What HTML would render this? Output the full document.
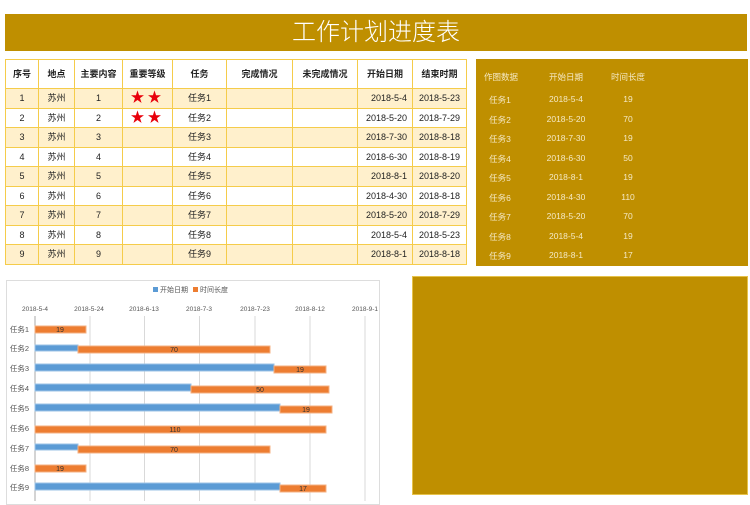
<!DOCTYPE html>
<html><head><meta charset="utf-8"><style>
*{margin:0;padding:0;box-sizing:border-box}
body{width:750px;height:501px;background:#fff;position:relative;overflow:hidden;font-family:"Liberation Sans","Noto Sans CJK SC",sans-serif}
.title{position:absolute;left:5px;top:14px;width:742px;height:37px;background:#bf8f00;color:#fff;font-size:24px;line-height:37px;text-align:center;font-family:"Liberation Sans","Noto Sans CJK SC",sans-serif;font-weight:300}
table{position:absolute;left:5px;top:59px;border-collapse:collapse;font-size:9px;color:#222;table-layout:fixed;width:461px}
td{border:1px solid #f5cc4a;text-align:center;height:19.5px;line-height:12px;padding:0;overflow:hidden}
tr.h td{height:29px;font-weight:bold;font-size:9px}
tr.y td{background:#fff0cc}
td.r{text-align:right;padding-right:5px}
.star{color:#e8000b;font-size:14px;line-height:12px;letter-spacing:3px;display:inline-block;height:12px}
.panel{position:absolute;left:476px;top:59px;width:272px;height:207px;background:#bf8f00;color:#f5e9c4;font-size:8.5px}
.panel div{position:absolute;width:70px;text-align:center}
.gold{position:absolute;left:412px;top:276px;width:336px;height:219px;background:#bf8f00;border:1px solid #e6c24a}
.chart{position:absolute;left:6px;top:280px;width:374px;height:225px;border:1px solid #ddd;background:#fff}
</style></head><body>
<div class="title">工作计划进度表</div>
<table>
<colgroup><col style="width:33px"><col style="width:36px"><col style="width:48px"><col style="width:50px"><col style="width:54px"><col style="width:66px"><col style="width:65px"><col style="width:55px"><col style="width:54px"></colgroup>
<tr class="h"><td>序号</td><td>地点</td><td>主要内容</td><td>重要等级</td><td>任务</td><td>完成情况</td><td>未完成情况</td><td>开始日期</td><td>结束时期</td></tr>
<tr class="y"><td>1</td><td>苏州</td><td>1</td><td><span class="star">★★</span></td><td>任务1</td><td></td><td></td><td class="r">2018-5-4</td><td>2018-5-23</td></tr>
<tr><td>2</td><td>苏州</td><td>2</td><td><span class="star">★★</span></td><td>任务2</td><td></td><td></td><td class="r">2018-5-20</td><td>2018-7-29</td></tr>
<tr class="y"><td>3</td><td>苏州</td><td>3</td><td></td><td>任务3</td><td></td><td></td><td class="r">2018-7-30</td><td>2018-8-18</td></tr>
<tr><td>4</td><td>苏州</td><td>4</td><td></td><td>任务4</td><td></td><td></td><td class="r">2018-6-30</td><td>2018-8-19</td></tr>
<tr class="y"><td>5</td><td>苏州</td><td>5</td><td></td><td>任务5</td><td></td><td></td><td class="r">2018-8-1</td><td>2018-8-20</td></tr>
<tr><td>6</td><td>苏州</td><td>6</td><td></td><td>任务6</td><td></td><td></td><td class="r">2018-4-30</td><td>2018-8-18</td></tr>
<tr class="y"><td>7</td><td>苏州</td><td>7</td><td></td><td>任务7</td><td></td><td></td><td class="r">2018-5-20</td><td>2018-7-29</td></tr>
<tr><td>8</td><td>苏州</td><td>8</td><td></td><td>任务8</td><td></td><td></td><td class="r">2018-5-4</td><td>2018-5-23</td></tr>
<tr class="y"><td>9</td><td>苏州</td><td>9</td><td></td><td>任务9</td><td></td><td></td><td class="r">2018-8-1</td><td>2018-8-18</td></tr>
</table>
<div class="panel">
<div style="left:-10px;top:12px">作图数据</div><div style="left:55px;top:12px">开始日期</div><div style="left:117px;top:12px">时间长度</div>
<div style="left:-11px;top:35px">任务1</div><div style="left:55px;top:35px">2018-5-4</div><div style="left:117px;top:35px">19</div>
<div style="left:-11px;top:55px">任务2</div><div style="left:55px;top:55px">2018-5-20</div><div style="left:117px;top:55px">70</div>
<div style="left:-11px;top:74px">任务3</div><div style="left:55px;top:74px">2018-7-30</div><div style="left:117px;top:74px">19</div>
<div style="left:-11px;top:94px">任务4</div><div style="left:55px;top:94px">2018-6-30</div><div style="left:117px;top:94px">50</div>
<div style="left:-11px;top:113px">任务5</div><div style="left:55px;top:113px">2018-8-1</div><div style="left:117px;top:113px">19</div>
<div style="left:-11px;top:133px">任务6</div><div style="left:55px;top:133px">2018-4-30</div><div style="left:117px;top:133px">110</div>
<div style="left:-11px;top:152px">任务7</div><div style="left:55px;top:152px">2018-5-20</div><div style="left:117px;top:152px">70</div>
<div style="left:-11px;top:172px">任务8</div><div style="left:55px;top:172px">2018-5-4</div><div style="left:117px;top:172px">19</div>
<div style="left:-11px;top:191px">任务9</div><div style="left:55px;top:191px">2018-8-1</div><div style="left:117px;top:191px">17</div>
</div>
<div class="gold"></div>
<div class="chart"></div>
<svg style="position:absolute;left:0;top:0" width="750" height="501" font-family="Liberation Sans, Noto Sans CJK SC, sans-serif">
<g stroke="#d9d9d9" stroke-width="1">
<line x1="90" y1="316" x2="90" y2="501"/><line x1="144.5" y1="316" x2="144.5" y2="501"/><line x1="199.5" y1="316" x2="199.5" y2="501"/><line x1="255" y1="316" x2="255" y2="501"/><line x1="310" y1="316" x2="310" y2="501"/><line x1="365" y1="316" x2="365" y2="501"/>
</g>
<line x1="35" y1="316" x2="35" y2="501" stroke="#aaa"/>
<rect x="153" y="287" width="5" height="5" fill="#5b9bd5"/><text x="160" y="292" font-size="7" fill="#555">开始日期</text>
<rect x="193" y="287" width="5" height="5" fill="#ed7d31"/><text x="200" y="292" font-size="7" fill="#555">时间长度</text>
<g font-size="6.5" fill="#555" text-anchor="middle">
<text x="35" y="311">2018-5-4</text><text x="89" y="311">2018-5-24</text><text x="144" y="311">2018-6-13</text><text x="199" y="311">2018-7-3</text><text x="255" y="311">2018-7-23</text><text x="310" y="311">2018-8-12</text><text x="365" y="311">2018-9-1</text>
</g>
<g font-size="7.5" fill="#555" text-anchor="end">
<text x="29" y="332">任务1</text><text x="29" y="351">任务2</text><text x="29" y="371">任务3</text><text x="29" y="391">任务4</text><text x="29" y="411">任务5</text><text x="29" y="431">任务6</text><text x="29" y="451">任务7</text><text x="29" y="471">任务8</text><text x="29" y="490">任务9</text>
</g>
<g fill="#5b9bd5" stroke="#9cc3e6" stroke-width="1">
<rect x="35" y="345" width="43" height="6"/><rect x="35" y="364" width="239" height="7"/><rect x="35" y="384" width="156" height="7"/><rect x="35" y="404" width="245" height="7"/><rect x="35" y="444" width="43" height="6"/><rect x="35" y="483" width="245" height="7"/>
</g>
<g fill="#ed7d31" stroke="#f4b183" stroke-width="1">
<rect x="35" y="326" width="51" height="7"/><rect x="78" y="346" width="192" height="7"/><rect x="274" y="366" width="52" height="7"/><rect x="191" y="386" width="138" height="7"/><rect x="280" y="406" width="52" height="7"/><rect x="35" y="426" width="291" height="7"/><rect x="78" y="446" width="192" height="7"/><rect x="35" y="465" width="51" height="7"/><rect x="280" y="485" width="46" height="7"/>
</g>
<g font-size="7" fill="#333" text-anchor="middle">
<text x="60" y="332">19</text><text x="174" y="352">70</text><text x="300" y="372">19</text><text x="260" y="392">50</text><text x="306" y="412">19</text><text x="175" y="432">110</text><text x="174" y="452">70</text><text x="60" y="471">19</text><text x="303" y="491">17</text>
</g>
</svg>
</body></html>
